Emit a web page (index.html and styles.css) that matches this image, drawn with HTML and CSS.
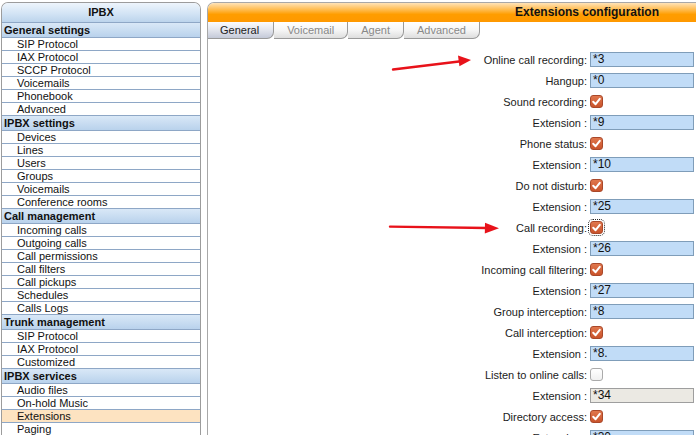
FILE: index.html
```html
<!DOCTYPE html>
<html>
<head>
<meta charset="utf-8">
<title>IPBX - Extensions configuration</title>
<link rel="stylesheet" href="styles.css">
</head>
<body>
<div class="page">
  <aside class="menu">
    <div class="menu-title">IPBX</div>
    <div class="sec">General settings</div>
    <div class="item">SIP Protocol</div>
    <div class="item">IAX Protocol</div>
    <div class="item">SCCP Protocol</div>
    <div class="item">Voicemails</div>
    <div class="item">Phonebook</div>
    <div class="item">Advanced</div>
    <div class="sec">IPBX settings</div>
    <div class="item">Devices</div>
    <div class="item">Lines</div>
    <div class="item">Users</div>
    <div class="item">Groups</div>
    <div class="item">Voicemails</div>
    <div class="item">Conference rooms</div>
    <div class="sec">Call management</div>
    <div class="item">Incoming calls</div>
    <div class="item">Outgoing calls</div>
    <div class="item">Call permissions</div>
    <div class="item">Call filters</div>
    <div class="item">Call pickups</div>
    <div class="item">Schedules</div>
    <div class="item">Calls Logs</div>
    <div class="sec">Trunk management</div>
    <div class="item">SIP Protocol</div>
    <div class="item">IAX Protocol</div>
    <div class="item">Customized</div>
    <div class="sec">IPBX services</div>
    <div class="item">Audio files</div>
    <div class="item">On-hold Music</div>
    <div class="item selected">Extensions</div>
    <div class="item">Paging</div>
  </aside>

  <main class="panel">
    <div class="panel-title">Extensions configuration</div>
    <div class="tabs">
      <div class="tab active">General</div>
      <div class="tab">Voicemail</div>
      <div class="tab">Agent</div>
      <div class="tab">Advanced</div>
    </div>
    <div class="form">
      <label class="lbl">Online call recording:</label><div class="fld"><span class="inp">*3</span></div>
      <label class="lbl">Hangup:</label><div class="fld"><span class="inp">*0</span></div>
      <label class="lbl">Sound recording:</label><div class="fld"><span class="cb on"><svg viewBox="0 0 13 13" width="13" height="13"><path d="M3.2 6.8 L5.6 9.2 L9.8 3.8" fill="none" stroke="#fff" stroke-width="2" stroke-linecap="round" stroke-linejoin="round"/></svg></span></div>
      <label class="lbl">Extension :</label><div class="fld"><span class="inp">*9</span></div>
      <label class="lbl">Phone status:</label><div class="fld"><span class="cb on"><svg viewBox="0 0 13 13" width="13" height="13"><path d="M3.2 6.8 L5.6 9.2 L9.8 3.8" fill="none" stroke="#fff" stroke-width="2" stroke-linecap="round" stroke-linejoin="round"/></svg></span></div>
      <label class="lbl">Extension :</label><div class="fld"><span class="inp">*10</span></div>
      <label class="lbl">Do not disturb:</label><div class="fld"><span class="cb on"><svg viewBox="0 0 13 13" width="13" height="13"><path d="M3.2 6.8 L5.6 9.2 L9.8 3.8" fill="none" stroke="#fff" stroke-width="2" stroke-linecap="round" stroke-linejoin="round"/></svg></span></div>
      <label class="lbl">Extension :</label><div class="fld"><span class="inp">*25</span></div>
      <label class="lbl">Call recording:</label><div class="fld"><span class="cb on focus"><svg viewBox="0 0 13 13" width="13" height="13"><path d="M3.2 6.8 L5.6 9.2 L9.8 3.8" fill="none" stroke="#fff" stroke-width="2" stroke-linecap="round" stroke-linejoin="round"/></svg></span></div>
      <label class="lbl">Extension :</label><div class="fld"><span class="inp">*26</span></div>
      <label class="lbl">Incoming call filtering:</label><div class="fld"><span class="cb on"><svg viewBox="0 0 13 13" width="13" height="13"><path d="M3.2 6.8 L5.6 9.2 L9.8 3.8" fill="none" stroke="#fff" stroke-width="2" stroke-linecap="round" stroke-linejoin="round"/></svg></span></div>
      <label class="lbl">Extension :</label><div class="fld"><span class="inp">*27</span></div>
      <label class="lbl">Group interception:</label><div class="fld"><span class="inp">*8</span></div>
      <label class="lbl">Call interception:</label><div class="fld"><span class="cb on"><svg viewBox="0 0 13 13" width="13" height="13"><path d="M3.2 6.8 L5.6 9.2 L9.8 3.8" fill="none" stroke="#fff" stroke-width="2" stroke-linecap="round" stroke-linejoin="round"/></svg></span></div>
      <label class="lbl">Extension :</label><div class="fld"><span class="inp">*8.</span></div>
      <label class="lbl">Listen to online calls:</label><div class="fld"><span class="cb"></span></div>
      <label class="lbl">Extension :</label><div class="fld"><span class="inp disabled">*34</span></div>
      <label class="lbl">Directory access:</label><div class="fld"><span class="cb on"><svg viewBox="0 0 13 13" width="13" height="13"><path d="M3.2 6.8 L5.6 9.2 L9.8 3.8" fill="none" stroke="#fff" stroke-width="2" stroke-linecap="round" stroke-linejoin="round"/></svg></span></div>
      <label class="lbl">Extension :</label><div class="fld"><span class="inp">*30</span></div>
    </div>
  </main>

  <svg class="arrows" width="696" height="435" viewBox="0 0 696 435">
    <line x1="393" y1="69.5" x2="461" y2="61.2" stroke="#e8121a" stroke-width="2.4" stroke-linecap="round"/>
    <polygon points="471,60 458,55.6 459.4,66.2" fill="#e8121a"/>
    <line x1="390" y1="226.6" x2="487" y2="228" stroke="#e8121a" stroke-width="2.4" stroke-linecap="round"/>
    <polygon points="499,228.3 485,222.8 484.8,233.6" fill="#e8121a"/>
  </svg>
</div>
</body>
</html>
```

FILE: styles.css
```css
html, body {
  margin: 0;
  padding: 0;
  background: #ffffff;
  overflow: hidden;
}

body {
  font-family: "Liberation Sans", Arial, sans-serif;
  font-size: 11px;
  color: #111;
}

.page {
  position: relative;
  display: flex;
  align-items: flex-start;
  gap: 6px;
  padding: 2px 0 0 1px;
  width: 1000px;
  height: 433px;
}

/* ---------- left menu ---------- */
.menu {
  width: 198px;
  flex: none;
  border: 1px solid #9c9c9c;
  border-bottom: none;
  border-radius: 7px 7px 0 0;
  overflow: hidden;
  background: #fff;
}

.menu-title {
  height: 19px;
  line-height: 18px;
  text-align: center;
  font-weight: bold;
  font-size: 11px;
  background: linear-gradient(#eef5fc, #d3e4f5 55%, #bcd4ec);
  border-bottom: 1px solid #8ea7c6;
}

.sec {
  height: 14px;
  line-height: 14px;
  padding-left: 2px;
  font-weight: bold;
  background: linear-gradient(#d9e8f7, #b9d2ec);
  border-bottom: 1px solid #8ea7c6;
}

.item {
  height: 12px;
  line-height: 12px;
  padding-left: 15px;
  border-bottom: 1px solid #8ea7c6;
  background: #fff;
  white-space: nowrap;
}

.item.selected {
  background: #fde3c1;
}

/* ---------- right panel ---------- */
.panel {
  width: 758px;
  flex: none;
  border: 1px solid #a8a8a8;
  border-bottom: none;
  border-radius: 7px 7px 0 0;
  overflow: hidden;
  background: #fff;
  height: 440px;
}

.panel-title {
  height: 19px;
  line-height: 18px;
  text-align: center;
  font-weight: bold;
  font-size: 12px;
  color: #111;
  background: linear-gradient(#ffe3b8 0%, #ffb640 40%, #ff9d00 60%, #ff9900 100%);
}

.tabs {
  display: flex;
  height: 17px;
}

.tab {
  height: 16px;
  line-height: 16px;
  padding: 0 13px;
  color: #888888;
  background: linear-gradient(#ffffff 0%, #f6f6f6 50%, #dedede 100%);
  border-right: 1px solid #9a9a9a;
  border-bottom: 1px solid #9a9a9a;
  border-radius: 0 0 7px 0;
}

.tab.active {
  color: #222;
  padding: 0 14px 0 12px;
  background: linear-gradient(#fbfbfd 0%, #e6e8ef 45%, #c4c9d8 100%);
}

/* ---------- form ---------- */
.form {
  display: grid;
  grid-template-columns: 379px 104px;
  column-gap: 3px;
  grid-auto-rows: 21px;
  padding-top: 10px;
  align-items: center;
}

.lbl {
  text-align: right;
  color: #1b1b1b;
  white-space: nowrap;
}

.fld {
  display: flex;
  align-items: center;
}

.inp {
  box-sizing: border-box;
  width: 104px;
  height: 15px;
  line-height: 13px;
  padding: 0 2px;
  font-size: 12px;
  color: #111;
  background: #c1dcf7;
  border: 1px solid #7f9db9;
}

.inp.disabled {
  background: #ebe9e3;
  border-color: #9e9e9e;
}

.cb {
  box-sizing: border-box;
  width: 13px;
  height: 13px;
  border-radius: 3px;
  border: 1px solid #aaaaaa;
  background: linear-gradient(#ffffff, #f0f0f0);
  display: block;
}

.cb svg {
  display: block;
  margin: -1px;
}

.cb.on {
  border-color: #a9482a;
  background: linear-gradient(#e0774d, #c9532b);
}

.cb.focus {
  outline: 1px dotted #222;
  outline-offset: 1px;
}

/* ---------- annotation arrows ---------- */
.arrows {
  position: absolute;
  left: 0;
  top: 0;
  pointer-events: none;
}
```
